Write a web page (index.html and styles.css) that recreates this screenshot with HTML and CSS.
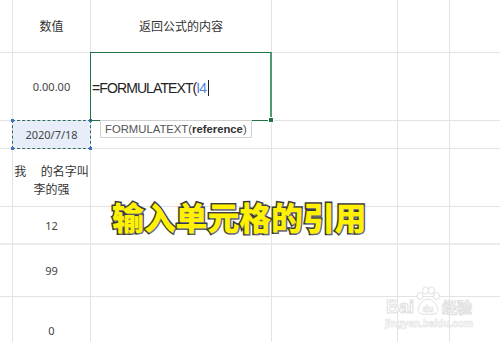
FILE: index.html
```html
<!DOCTYPE html>
<html lang="zh-CN">
<head>
<meta charset="utf-8">
<title>FORMULATEXT</title>
<link rel="stylesheet" href="styles.css">
</head>
<body>
<div class="page">
  <div class="sheet">
    <!-- row A -->
    <div class="c"></div>
    <div class="c hd">数值</div>
    <div class="c hd">返回公式的内容</div>
    <div class="c"></div><div class="c"></div><div class="c last"></div>
    <!-- row B -->
    <div class="c"></div>
    <div class="c num">0.00.00</div>
    <div class="c active">
      <span class="formula">=FORMULATEXT(<span class="ref">I4</span></span><span class="caret"></span>
      <span class="handle"></span>
      <div class="tip">FORMULATEXT(<b>reference</b>)</div>
    </div>
    <div class="c"></div><div class="c"></div><div class="c last"></div>
    <!-- row C -->
    <div class="c"></div>
    <div class="c num copied">2020/7/18<i class="k k1"></i><i class="k k2"></i><i class="k k3"></i><i class="k k4"></i></div>
    <div class="c"></div>
    <div class="c"></div><div class="c"></div><div class="c last"></div>
    <!-- row D -->
    <div class="c"></div>
    <div class="c wrap"><span>我　 的名字叫</span><span>李的强</span></div>
    <div class="c"></div>
    <div class="c"></div><div class="c"></div><div class="c last"></div>
    <!-- row E -->
    <div class="c thick"></div>
    <div class="c num thick">12</div>
    <div class="c thick"></div>
    <div class="c thick"></div><div class="c thick"></div><div class="c thick last"></div>
    <!-- row F -->
    <div class="c"></div>
    <div class="c num">99</div>
    <div class="c"></div>
    <div class="c"></div><div class="c"></div><div class="c last"></div>
    <!-- row G -->
    <div class="c"></div>
    <div class="c num low">0</div>
    <div class="c"></div>
    <div class="c"></div><div class="c"></div><div class="c last"></div>
  </div>

  <div class="caption">输入单元格的引用</div>

  <div class="watermark">
    <div class="wm-top">
      <span class="wm-txt">Bai</span>
      <svg class="paw" width="26" height="30" viewBox="0 0 26 30">
        <g fill="#fff" stroke="#e0e0e0" stroke-width="1">
          <ellipse cx="5" cy="10" rx="3" ry="3.6"/>
          <ellipse cx="10.5" cy="4.5" rx="3" ry="3.6"/>
          <ellipse cx="16.5" cy="4.5" rx="3" ry="3.6"/>
          <ellipse cx="21.5" cy="10" rx="3" ry="3.6"/>
          <path d="M13 13 C8 13 3 20 3 24 C3 28 8 29 13 28 C18 29 23 28 23 24 C23 20 18 13 13 13 Z"/>
        </g>
        <text x="13" y="26" text-anchor="middle" class="paw-du">du</text>
      </svg>
      <span class="wm-txt cjk">经验</span>
    </div>
    <div class="wm-url">jingyan.baidu.com</div>
  </div>
</div>
</body>
</html>
```
FILE: styles.css
```css
html, body {
  margin: 0;
  padding: 0;
  background: #fff;
}
.page {
  position: relative;
  width: 500px;
  height: 342px;
  overflow: hidden;
  font-family: "Noto Sans", "Noto Sans CJK SC", sans-serif;
}
.sheet {
  display: grid;
  grid-template-columns: 13px 78px 181px 126px 52px 1fr;
  grid-template-rows: 53px 68px 28px 58px 38px 52px 70px;
  width: 500px;
}
.c {
  box-sizing: border-box;
  border-right: 1px solid #e3e3e3;
  border-bottom: 1px solid #e3e3e3;
  display: flex;
  align-items: center;
  justify-content: center;
  color: #3d3d3d;
  font-size: 11px;
  position: relative;
}
.c.last { border-right: none; }
.c.thick { border-bottom: 2px solid #ececec; }
.hd {
  font-family: "Noto Sans CJK SC", sans-serif;
  font-size: 12px;
  color: #333;
  padding-bottom: 1px;
}
.num {
  font-family: "Noto Sans", "Noto Sans CJK SC", sans-serif;
  font-size: 11px;
  color: #444;
}
.num.low { align-items: flex-start; padding-top: 26px; }
.wrap {
  flex-direction: column;
  font-family: "Noto Sans CJK SC", sans-serif;
  font-size: 12px;
  line-height: 18px;
  color: #333;
  padding-top: 4px;
}
.wrap span { white-space: pre; }

/* active cell */
.active {
  justify-content: flex-start;
  align-items: center;
  padding-top: 2px;
  z-index: 2;
}
.active::after {
  content: "";
  position: absolute;
  left: -1px;
  top: -1px;
  right: -1px;
  bottom: -1px;
  border: 1px solid #217346;
  border-right: 2px solid #4f9a72;
  pointer-events: none;
}
.formula {
  font-family: "Liberation Sans", sans-serif;
  font-size: 14px;
  letter-spacing: -0.9px;
  color: #222;
  margin-left: 1px;
}
.ref { color: #5a7fd8; }
.caret {
  display: inline-block;
  width: 1px;
  height: 16px;
  background: #222;
  margin-left: 2px;
}
.handle {
  position: absolute;
  right: -3px;
  bottom: -3px;
  width: 4px;
  height: 4px;
  background: #217346;
  border: 1px solid #fff;
  z-index: 3;
}
.tip {
  position: absolute;
  left: 9px;
  top: 100%;
  height: 18px;
  box-sizing: border-box;
  padding: 0 4px;
  border: 1px solid #d0d0d0;
  background: #fff;
  font-family: "Liberation Sans", sans-serif;
  font-size: 11.3px;
  line-height: 16px;
  color: #555;
  white-space: nowrap;
  z-index: 4;
}
.tip b { color: #333; }

/* copied cell */
.copied {
  background: #e8eef9;
}
.copied::before {
  content: "";
  position: absolute;
  left: -1px;
  top: -1px;
  right: -1px;
  bottom: -1px;
  border: 1px dashed #2f6e5f;
}
.k {
  position: absolute;
  width: 3px;
  height: 3px;
  background: #3c6fd2;
  z-index: 1;
}
.k1 { left: -2px; top: -2px; }
.k2 { right: -2px; top: -2px; }
.k3 { left: -2px; bottom: -2px; }
.k4 { right: -2px; bottom: -2px; }

/* big caption overlay */
.caption {
  position: absolute;
  left: 112px;
  top: 196px;
  font-family: "Noto Sans CJK SC", sans-serif;
  font-weight: 900;
  font-size: 31.8px;
  line-height: 40px;
  color: #fff100;
  -webkit-text-stroke: 3px #3a3a3a;
  paint-order: stroke fill;
  text-shadow: 1px 1px 0 #777;
  white-space: nowrap;
  z-index: 5;
}

/* watermark overlay */
.watermark {
  position: absolute;
  left: 383px;
  top: 286px;
  width: 92px;
  display: flex;
  flex-direction: column;
  align-items: center;
  z-index: 5;
}
.wm-top {
  display: flex;
  align-items: flex-end;
  gap: 1px;
}
.wm-txt {
  font-family: "Liberation Sans", sans-serif;
  font-weight: bold;
  font-size: 18px;
  line-height: 18px;
  color: #fff;
  -webkit-text-stroke: 1px #e0e0e0;
}
.wm-txt.cjk {
  font-family: "Noto Sans CJK SC", sans-serif;
  font-size: 15px;
  line-height: 18px;
}
.paw { display: block; }
.paw-du {
  font-family: "Liberation Sans", sans-serif;
  font-weight: bold;
  font-size: 9px;
  fill: #fff;
  stroke: #e0e0e0;
  stroke-width: 0.6;
}
.wm-url {
  font-family: "Liberation Sans", sans-serif;
  font-weight: bold;
  font-size: 10px;
  line-height: 12px;
  color: #fff;
  -webkit-text-stroke: 0.6px #e2e2e2;
  margin-top: 2px;
}
```
